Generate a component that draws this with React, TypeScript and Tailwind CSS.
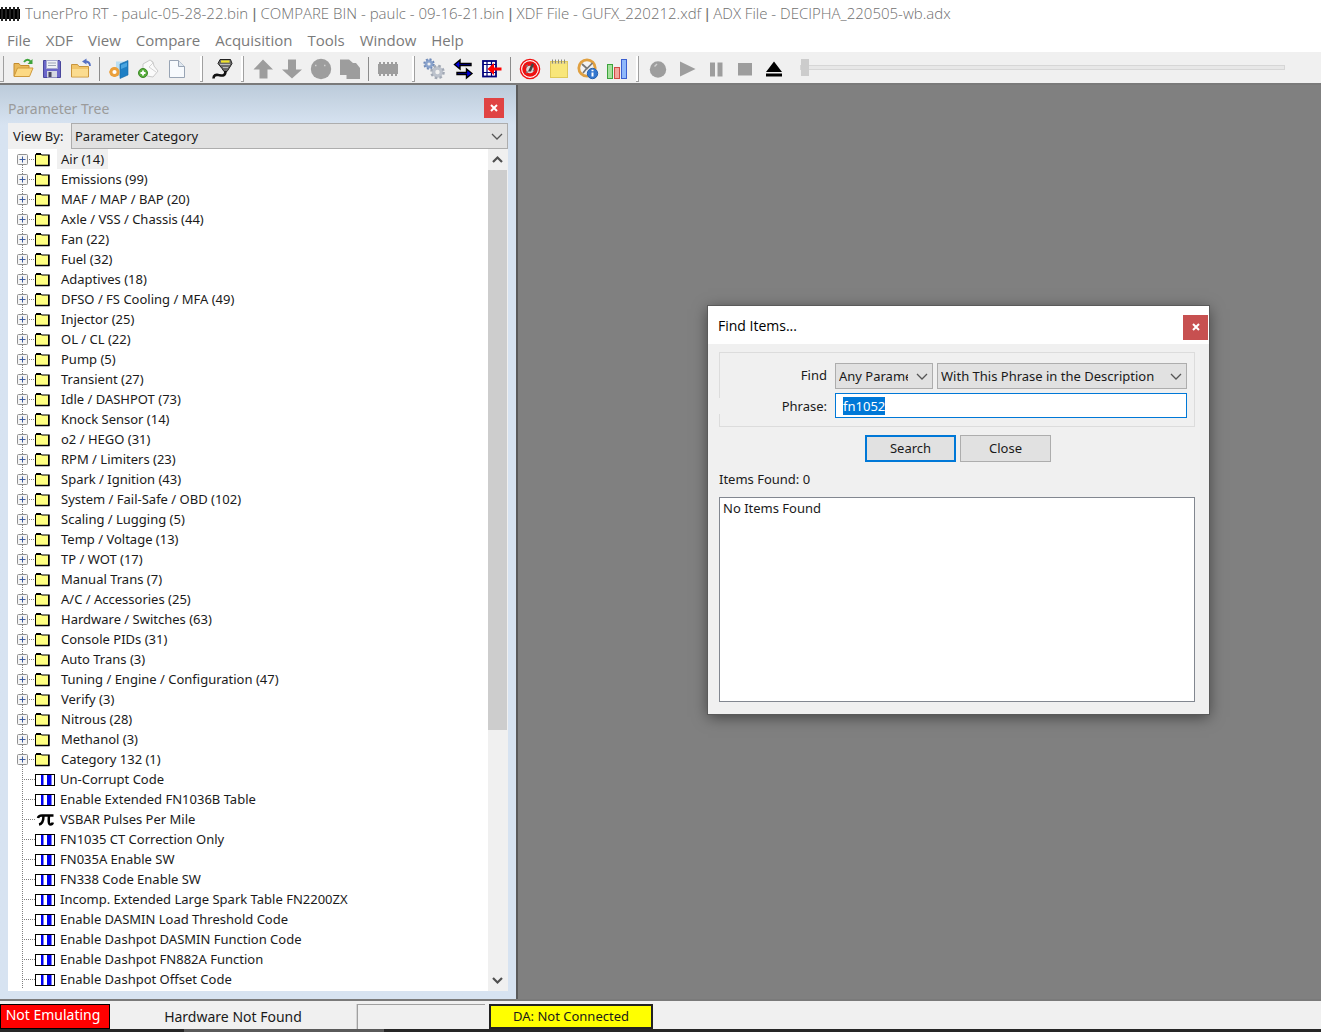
import React, { useEffect, useRef } from 'react';

const titleParts = [
  'TunerPro RT - paulc-05-28-22.bin',
  'COMPARE BIN - paulc - 09-16-21.bin',
  'XDF File - GUFX_220212.xdf',
  'ADX File - DECIPHA_220505-wb.adx',
];

const menuItems = ['File', 'XDF', 'View', 'Compare', 'Acquisition', 'Tools', 'Window', 'Help'];

const categories = [
  'Air (14)',
  'Emissions (99)',
  'MAF / MAP / BAP (20)',
  'Axle / VSS / Chassis (44)',
  'Fan (22)',
  'Fuel (32)',
  'Adaptives (18)',
  'DFSO / FS Cooling / MFA (49)',
  'Injector (25)',
  'OL / CL (22)',
  'Pump (5)',
  'Transient (27)',
  'Idle / DASHPOT (73)',
  'Knock Sensor (14)',
  'o2 / HEGO (31)',
  'RPM / Limiters (23)',
  'Spark / Ignition (43)',
  'System / Fail-Safe / OBD (102)',
  'Scaling / Lugging (5)',
  'Temp / Voltage (13)',
  'TP / WOT (17)',
  'Manual Trans (7)',
  'A/C / Accessories (25)',
  'Hardware / Switches (63)',
  'Console PIDs (31)',
  'Auto Trans (3)',
  'Tuning / Engine / Configuration (47)',
  'Verify (3)',
  'Nitrous (28)',
  'Methanol (3)',
  'Category 132 (1)',
];

const parameters = [
  { label: 'Un-Corrupt Code', kind: 'flag' },
  { label: 'Enable Extended FN1036B Table', kind: 'flag' },
  { label: 'VSBAR Pulses Per Mile', kind: 'constant' },
  { label: 'FN1035 CT Correction Only', kind: 'flag' },
  { label: 'FN035A Enable SW', kind: 'flag' },
  { label: 'FN338 Code Enable SW', kind: 'flag' },
  { label: 'Incomp. Extended Large Spark Table FN2200ZX', kind: 'flag' },
  { label: 'Enable DASMIN Load Threshold Code', kind: 'flag' },
  { label: 'Enable Dashpot DASMIN Function Code', kind: 'flag' },
  { label: 'Enable Dashpot FN882A Function', kind: 'flag' },
  { label: 'Enable Dashpot Offset Code', kind: 'flag' },
];

const Icon: React.FC<{ children: React.ReactNode }> = ({ children }) => (
  <svg className="h-[22px] w-[22px]" viewBox="0 0 22 22" fill="none" aria-hidden="true">
    {children}
  </svg>
);

const openIcon = (
  <Icon>
    <path d="M2 18V5.500h5l1.500 2H17v3" fill="#e9b95a" stroke="#c48b2c" />
    <path d="M2 18.500 5.500 10H21l-3.500 8.500z" fill="#fcd983" stroke="#cf9a3b" />
    <path d="M12 4c2-3 5-3 7 0" stroke="#3da33a" strokeWidth="1.800" />
    <path d="M20.500 1v5h-5z" fill="#3da33a" />
  </Icon>
);

const saveIcon = (
  <Icon>
    <path d="M2.500 2.500h16l1 1v16h-17z" fill="#6b67c9" stroke="#4a479c" />
    <rect x="5.500" y="2.500" width="11" height="8" fill="#eef0f6" stroke="#a5a7cf" />
    <path d="M7 5h8M7 7.500h8" stroke="#9ba3b5" />
    <rect x="6" y="13" width="10" height="6.500" fill="#d5d8e2" />
    <rect x="7.500" y="14" width="3" height="5" fill="#47455f" />
  </Icon>
);

const closeFolderIcon = (
  <Icon>
    <path d="M1.500 19V6.500h6l1.500 2h9.500V19z" fill="#f1c56a" stroke="#c9953c" />
    <path d="M2 11h16v7.500H2z" fill="#fbdc8f" />
    <path d="M20 8c0-3-2-4.500-5-4.500" stroke="#5671c4" strokeWidth="1.800" />
    <path d="M12 3.500 16.500.500v6z" fill="#5671c4" />
  </Icon>
);

const compareIcon = (
  <Icon>
    <path d="M8 3.500h8V18H8z" fill="#b9dff5" />
    <path d="M12 6 20 2.500V17l-8 3.500z" fill="#1e7fc4" stroke="#1668a5" strokeWidth=".6" />
    <path d="M13 7 19 4.500v4L13 11z" fill="#4aa5e0" />
    <circle cx="6.500" cy="14" r="3.600" stroke="#eba03c" strokeWidth="3" fill="#fff" />
    <path d="M6.500 9v1M6.500 18v1M1.500 14h1M3 10.500l1 1M3 17.500l1-1M10 17.500l-1-1" stroke="#eba03c" strokeWidth="2" />
  </Icon>
);

const addScriptIcon = (
  <Icon>
    <path d="M6 6 13 2l3 2 1 4 4 5-5 6-6-1-4-6z" fill="#fafafa" stroke="#c9c9c9" />
    <path d="m13 2 3 3-4 4 7 5" stroke="#d4d4d4" />
    <circle cx="6" cy="15" r="4.500" fill="#58ad3c" stroke="#3d8a28" />
    <path d="M6 12.500v5M3.500 15h5" stroke="#fff" strokeWidth="1.800" />
  </Icon>
);

const newFileIcon = (
  <Icon>
    <path d="M3.500 2.500h9l6 6v11h-15z" fill="#f7fafd" stroke="#98a4b4" />
    <path d="M12.500 2.500v6h6" fill="#dfe7ef" stroke="#98a4b4" />
  </Icon>
);

const plugIcon = (
  <Icon>
    <path d="M9 1.500h10.500l1.500 4-3 5-2 3h-3l-2-3-4-5z" fill="#6a6a6a" stroke="#222" />
    <path d="M10 3.500h8.500" stroke="#f1e52a" strokeWidth="2.200" />
    <path d="M9 6.500h10M12 9.500h5" stroke="#bbb" />
    <path d="M14.500 13c0 6-4 4.500-7 4-2.500-.5-5 0-5 3.500" stroke="#111" strokeWidth="2.600" />
  </Icon>
);

const arrowUpIcon = (
  <Icon>
    <path d="M11 1.500 21 11.500h-5.500v9h-8v-9H1.500z" fill="#9d9d9d" />
  </Icon>
);

const arrowDownIcon = (
  <Icon>
    <path d="M11 20.500 1 11.500h6V1.500h8v10h6z" fill="#9d9d9d" />
  </Icon>
);

const faceIcon = (
  <Icon>
    <circle cx="11" cy="11" r="10.200" fill="#9d9d9d" />
    <path d="M5 7.500h1.500M14 7.500h1.500" stroke="#d0d0d0" strokeWidth="1.500" />
  </Icon>
);

const copyIcon = (
  <Icon>
    <path d="M1 1.500h9l4 3.500h3l4 5v11H7.500V17H1z" fill="#9d9d9d" />
  </Icon>
);

const chipIcon = (
  <Icon>
    <rect x="1" y="6" width="20" height="10" fill="#9d9d9d" />
    {[2, 6, 10, 14, 18].map((x) => (
      <rect key={x} x={x} y="4" width="2" height="14" fill="#9d9d9d" />
    ))}
  </Icon>
);

const gearsIcon = (
  <Icon>
    <circle cx="6" cy="6" r="3" stroke="#8aa3cc" strokeWidth="2.800" />
    <circle cx="6" cy="6" r="4.800" stroke="#6f8ab8" strokeWidth="1.800" strokeDasharray="2 1.770" />
    <circle cx="14.500" cy="14" r="4" stroke="#bcc2cc" strokeWidth="3.600" />
    <circle cx="14.500" cy="14" r="6.200" stroke="#a1a8b4" strokeWidth="2.200" strokeDasharray="2.600 2.270" />
  </Icon>
);

const swapIcon = (
  <Icon>
    <path d="M2.500 6.500 8 2v3.500h11v2H8V11z" fill="#0000e0" stroke="#000" strokeWidth="1.400" />
    <path d="m20 15.500-5.500-4.500v3.500H5v2h9.500V20z" fill="#0000e0" stroke="#000" strokeWidth="1.400" />
  </Icon>
);

const tableArrowIcon = (
  <Icon>
    <rect x="2" y="3" width="13" height="15.500" fill="#fff" stroke="#00007c" strokeWidth="1.800" />
    <path d="M2 6.500h13M2 14.500h13M6 3v15M10.500 3v15" stroke="#00007c" strokeWidth="1.200" />
    <path d="m6.500 11 6.500-6v4.500h7.500v3H13V17z" fill="#f00" />
  </Icon>
);

const gaugeIcon = (
  <Icon>
    <circle cx="11" cy="11" r="9.600" fill="#fff" stroke="#f01010" strokeWidth="1.400" />
    <circle cx="11" cy="11" r="7.800" fill="#ee1010" />
    <circle cx="11" cy="11.500" r="3.800" fill="#d8d8d8" />
    <path d="M9 13.500 13 5l2 1.500-3 7z" fill="#444" />
    <path d="M6.500 8.500 9 7M7 15l1.500-1.500M15.500 13l-1.500-1" stroke="#777" strokeWidth="1.300" />
  </Icon>
);

const noteIcon = (
  <Icon>
    <rect x="2.500" y="3.500" width="17" height="16" fill="#f8e67a" stroke="#dfc95a" />
    <path d="M3 5h16" stroke="#e9d88a" strokeWidth="2" />
    <path d="M4.500 1.500v4M7.500 1.500v4M10.500 1.500v4M13.500 1.500v4M16.500 1.500v4" stroke="#8a8a7a" />
  </Icon>
);

const clockInfoIcon = (
  <Icon>
    <circle cx="10" cy="10" r="8.200" fill="#f3f3f3" stroke="#e0a040" strokeWidth="2.800" />
    <path d="m5 6 5 4.500L15.500 5M10 10l-4 5" stroke="#777" strokeWidth="1.700" />
    <circle cx="15.500" cy="15.500" r="5.200" fill="#3477cf" stroke="#2560ae" />
    <path d="M15.500 14.500v4M15.500 11.800v1.500" stroke="#fff" strokeWidth="2" />
  </Icon>
);

const chartIcon = (
  <Icon>
    <rect x="1.500" y="6.500" width="5" height="14" fill="#a5e09c" stroke="#3ca33c" />
    <rect x="8.500" y="9.500" width="5" height="11" fill="#f2a59c" stroke="#cf4b45" />
    <rect x="15.500" y="1.500" width="5" height="19" fill="#8fb9fb" stroke="#3b5fd0" />
  </Icon>
);

const recordIcon = (
  <Icon>
    <circle cx="11" cy="11.500" r="8.200" fill="#9d9d9d" />
    <path d="m7.500 8.500 2.500-2.500" stroke="#d0d0d0" strokeWidth="1.500" />
  </Icon>
);

const playIcon = (
  <Icon>
    <path d="M4 3.500v15l15.500-7.500z" fill="#9d9d9d" />
  </Icon>
);

const pauseIcon = (
  <Icon>
    <path d="M5 4.500h5v14H5zM12.500 4.500h5v14h-5z" fill="#9d9d9d" />
  </Icon>
);

const stopIcon = (
  <Icon>
    <rect x="4" y="5" width="14" height="12.500" fill="#9d9d9d" />
  </Icon>
);

const ejectIcon = (
  <Icon>
    <path d="M11 3.500 19 14H3zM3 15.500h16v3H3z" fill="#000" />
  </Icon>
);

const ToolButton: React.FC<{ label: string; icon: React.ReactNode }> = ({ label, icon }) => (
  <button type="button" aria-label={label} className="flex w-[29px] shrink-0 items-center justify-center">
    {icon}
  </button>
);

const Divider = () => (
  <span className="flex w-[9px] shrink-0 items-center justify-center">
    <span className="h-6 w-px bg-[#8c8c8c]" />
  </span>
);

const Grip: React.FC<{ className: string }> = ({ className }) => (
  <span className={`flex shrink-0 items-center justify-end pr-1 ${className}`}>
    <span className="h-[26px] w-[3px] border-r border-b border-[#a0a0a0] bg-white" />
  </span>
);

const Chevron: React.FC<{ className?: string }> = ({ className = '' }) => (
  <svg className={`pointer-events-none h-[7px] w-3 ${className}`} viewBox="0 0 12 7" fill="none" aria-hidden="true">
    <path d="m1 1 5 5 5-5" stroke="#555" strokeWidth="1.300" />
  </svg>
);

const ScrollArrow: React.FC<{ up?: boolean }> = ({ up }) => (
  <svg className="h-[9px] w-[11px]" viewBox="0 0 11 9" fill="none" aria-hidden="true">
    <path d={up ? 'm1 7 4.500-4.500L10 7' : 'm1 2 4.500 4.500L10 2'} stroke="#505050" strokeWidth="2.200" />
  </svg>
);

const CloseGlyph = () => (
  <svg className="h-2 w-2" viewBox="0 0 8 8" aria-hidden="true">
    <path d="m1 1 6 6M7 1 1 7" stroke="#fff" strokeWidth="2" />
  </svg>
);

const FolderRow: React.FC<{ label: string; selected: boolean; first: boolean }> = ({ label, selected, first }) => (
  <li className="flex h-5 items-center">
    <svg className="h-5 w-[42px] shrink-0" viewBox="0 0 42 20" fill="none" aria-hidden="true">
      <path d={first ? 'M14.500 10v10' : 'M14.500 0v20'} stroke="#808080" strokeDasharray="1 1" />
      <path d="M21 10.500h6" stroke="#808080" strokeDasharray="1 1" />
      <rect x="9.500" y="5.500" width="10" height="10" rx="1" fill="#f5f5f5" stroke="#919191" />
      <path d="M11.500 10.500h6M14.500 7.500v6" stroke="#3b5a9e" />
      <path d="M27.500 16.500V5.500l1-1h4l1 1.500h7v10.500z" fill="#ffff80" stroke="#000" />
      <path d="M28 5h5" stroke="#000" strokeWidth="2" />
      <path d="M41 5.500V17M27 16.500h14.500" stroke="#000" strokeWidth="1.500" />
    </svg>
    <button type="button" className={`ml-[7px] h-5 px-1 leading-5 ${selected ? 'bg-[#f0f0f0]' : ''}`}>
      {label}
    </button>
  </li>
);

const ParameterRow: React.FC<{ label: string; kind: string }> = ({ label, kind }) => (
  <li className="flex h-5 items-center">
    <svg className="h-5 w-[49px] shrink-0" viewBox="0 0 49 20" fill="none" aria-hidden="true">
      <path d="M14.500 0v20M16 10.500h11" stroke="#808080" strokeDasharray="1 1" />
      {kind === 'flag' ? (
        <>
          <rect x="27.500" y="5.500" width="19" height="11" fill="#fff" stroke="#000" />
          <path d="M33 6h2.500v10H33zM39 6h4.500v10H39z" fill="#0000f0" />
        </>
      ) : (
        <path d="M30 9c.5-2.500 2-2.500 4-2.500h11.500M35.500 6.500c0 4-1 8.500-4.500 9M41 6.500c-.5 5-.5 9 1.500 9 1 0 2-.5 2.300-2" stroke="#000" strokeWidth="2.500" />
      )}
    </svg>
    <button type="button" className="pl-[3px] leading-5">{label}</button>
  </li>
);

const ParameterTree = () => (
  <aside className="flex w-[518px] shrink-0 flex-col border-r-2 border-[#5a5a5a] bg-[#d7e3f1] bg-linear-to-b from-[#bccbda] from-0% to-[#d7e3f1] to-[40px] px-2 pb-2">
    <div className="flex h-[38px] items-center justify-between pr-1 pt-2">
      <h2 className="text-[14px] text-[#9b9b9b]">Parameter Tree</h2>
      <button type="button" aria-label="Close parameter tree" className="flex size-5 items-center justify-center bg-[#e04343]">
        <CloseGlyph />
      </button>
    </div>
    <div className="flex h-[26px] shrink-0 bg-[#f0f0f0]">
      <label htmlFor="view-by" className="w-[63px] shrink-0 pl-[5px] leading-[26px]">View By:</label>
      <div className="relative flex flex-1">
        <select id="view-by" className="w-full appearance-none border border-[#adadad] bg-[#e1e1e1] px-[3px] pt-px">
          <option>Parameter Category</option>
        </select>
        <Chevron className="absolute top-[10px] right-[5px]" />
      </div>
    </div>
    <div className="flex min-h-0 flex-1 bg-white">
      <ul className="flex-1 overflow-hidden">
        {categories.map((label, i) => (
          <FolderRow key={label} label={label} selected={i === 0} first={i === 0} />
        ))}
        {parameters.map((p) => (
          <ParameterRow key={p.label} label={p.label} kind={p.kind} />
        ))}
      </ul>
      <div className="flex w-5 shrink-0 flex-col bg-[#f0f0f0] pr-px">
        <button type="button" aria-label="Scroll up" className="flex h-[21px] items-center justify-center">
          <ScrollArrow up />
        </button>
        <div className="flex-1">
          <div className="h-[70%] bg-[#cdcdcd]" />
        </div>
        <button type="button" aria-label="Scroll down" className="flex h-[21px] items-center justify-center">
          <ScrollArrow />
        </button>
      </div>
    </div>
  </aside>
);

const FindDialog = () => {
  const phraseRef = useRef<HTMLInputElement>(null);

  useEffect(() => {
    phraseRef.current?.focus();
    phraseRef.current?.select();
  }, []);

  return (
    <section
      role="dialog"
      aria-labelledby="find-title"
      className="absolute top-[221px] left-[190px] flex h-[408px] w-[501px] flex-col bg-[#f0f0f0] shadow-[0_3px_14px_rgba(0,0,0,0.5)] outline outline-[#5a5a5a]"
    >
      <header className="flex h-[38px] shrink-0 items-center justify-between bg-white pr-px pl-[10px]">
        <h2 id="find-title" className="font-['Open_Sans',sans-serif] text-[14px] text-black">Find Items...</h2>
        <button type="button" aria-label="Close dialog" className="mt-1 flex size-[25px] items-center justify-center bg-[#c75050]">
          <CloseGlyph />
        </button>
      </header>
      <div className="flex flex-1 flex-col pt-2 pr-[14px] pb-3 pl-[11px]">
        <fieldset className="flex flex-col gap-1 border border-[#dcdcdc] pt-[10px] pr-[7px] pb-2">
          <div className="flex h-[26px] gap-1">
            <label htmlFor="find-scope" className="w-[111px] shrink-0 pr-1 text-right leading-6">Find</label>
            <div className="relative flex w-[98px] shrink-0">
              <select id="find-scope" className="w-full appearance-none border border-[#adadad] bg-[#e1e1e1] pt-px pr-6 pl-[3px]">
                <option>Any Parameter</option>
              </select>
              <Chevron className="absolute top-[10px] right-[5px]" />
            </div>
            <div className="relative flex flex-1">
              <select aria-label="Match type" className="w-full appearance-none border border-[#adadad] bg-[#e1e1e1] pt-px pr-6 pl-[3px]">
                <option>With This Phrase in the Description</option>
              </select>
              <Chevron className="absolute top-[10px] right-[5px]" />
            </div>
          </div>
          <div className="flex h-[25px] items-center gap-1">
            <label htmlFor="find-phrase" className="-ml-px w-28 shrink-0 bg-[#f0f0f0] pr-1 text-right leading-4">Phrase:</label>
            <input
              id="find-phrase"
              ref={phraseRef}
              type="text"
              defaultValue="fn1052"
              className="h-full min-w-0 flex-1 border border-[#0078d7] bg-white px-[7px] outline-none selection:bg-[#0078d7] selection:text-white"
            />
          </div>
        </fieldset>
        <div className="flex justify-center gap-1 pt-2 pl-[2px]">
          <button type="button" className="h-[27px] w-[91px] border-2 border-[#0078d7] bg-[#e1e1e1]">Search</button>
          <button type="button" className="h-[27px] w-[91px] border border-[#adadad] bg-[#e1e1e1]">Close</button>
        </div>
        <p className="leading-[35px]">Items Found: 0</p>
        <ul className="flex-1 border border-[#828790] bg-white px-[3px]">
          <li className="leading-5">No Items Found</li>
        </ul>
      </div>
    </section>
  );
};

const App: React.FC = () => (
  <div className="flex h-screen flex-col overflow-hidden bg-[#f0f0f0] font-['Noto_Sans',sans-serif] text-[13px] text-[#1a1a1a]">
    <header className="flex h-7 shrink-0 items-center gap-[5px] bg-white">
      <svg className="h-4 w-5 shrink-0" viewBox="0 0 20 16" aria-hidden="true">
        <path d="M0 3h20v10H0z" fill="#000" />
        <path d="M1 1h2v14H1zM5 1h2v14H5zM9 1h2v14H9zM13 1h2v14h-2zM17 1h2v14h-2z" fill="#222" />
      </svg>
      <h1 className="truncate font-['Open_Sans',sans-serif] text-[15px] font-light text-[#6f6f6f]">
        {titleParts.map((part, i) => (
          <React.Fragment key={part}>
            {i > 0 && <span className="font-['Liberation_Sans',sans-serif]"> | </span>}
            {part}
          </React.Fragment>
        ))}
      </h1>
    </header>

    <nav className="flex h-6 shrink-0 items-center gap-[15px] bg-white px-[7px] font-['Open_Sans',sans-serif] text-[15px] text-[#7a7a7a]">
      {menuItems.map((item) => (
        <button key={item} type="button">{item}</button>
      ))}
    </nav>

    <div className="flex h-[33px] shrink-0 border-b-2 border-[#7a7a7a] pt-[3px]">
      <span className="mr-1 h-[26px] w-1 shrink-0 self-center border-r border-b border-[#a0a0a0]" />
      <ToolButton label="Open" icon={openIcon} />
      <ToolButton label="Save" icon={saveIcon} />
      <ToolButton label="Close file" icon={closeFolderIcon} />
      <Divider />
      <ToolButton label="Compare" icon={compareIcon} />
      <ToolButton label="Add definition" icon={addScriptIcon} />
      <ToolButton label="New definition" icon={newFileIcon} />
      <Grip className="w-4" />
      <ToolButton label="Connect" icon={plugIcon} />
      <Grip className="w-3" />
      <ToolButton label="Upload" icon={arrowUpIcon} />
      <ToolButton label="Download" icon={arrowDownIcon} />
      <ToolButton label="Verify" icon={faceIcon} />
      <ToolButton label="Copy" icon={copyIcon} />
      <Divider />
      <ToolButton label="Chip" icon={chipIcon} />
      <Grip className="w-[17px]" />
      <ToolButton label="Settings" icon={gearsIcon} />
      <ToolButton label="Swap" icon={swapIcon} />
      <ToolButton label="Import table" icon={tableArrowIcon} />
      <Divider />
      <ToolButton label="Gauges" icon={gaugeIcon} />
      <ToolButton label="Notes" icon={noteIcon} />
      <ToolButton label="History" icon={clockInfoIcon} />
      <ToolButton label="Charts" icon={chartIcon} />
      <Grip className="w-3" />
      <ToolButton label="Record" icon={recordIcon} />
      <ToolButton label="Play" icon={playIcon} />
      <ToolButton label="Pause" icon={pauseIcon} />
      <ToolButton label="Stop" icon={stopIcon} />
      <ToolButton label="Eject" icon={ejectIcon} />
      <input
        type="range"
        aria-label="Playback position"
        defaultValue={0}
        className="mr-9 mb-1 ml-3 min-w-0 flex-1 appearance-none bg-transparent [&::-webkit-slider-runnable-track]:h-[5px] [&::-webkit-slider-runnable-track]:border [&::-webkit-slider-runnable-track]:border-[#d6d6d6] [&::-webkit-slider-runnable-track]:bg-[#e7e7e7] [&::-webkit-slider-thumb]:-mt-[7px] [&::-webkit-slider-thumb]:h-[17px] [&::-webkit-slider-thumb]:w-2 [&::-webkit-slider-thumb]:appearance-none [&::-webkit-slider-thumb]:bg-[#cccccc]"
      />
    </div>

    <main className="flex min-h-0 flex-1">
      <ParameterTree />
      <div className="relative flex-1 bg-[#808080]">
        <FindDialog />
      </div>
    </main>

    <footer className="flex h-[30px] shrink-0 border-t-2 border-[#7a7a7a] pt-[3px] text-[14px]">
      <div className="flex w-[110px] shrink-0 justify-center border border-black bg-[#ff0000] pr-1 leading-5 text-white">Not Emulating</div>
      <div className="flex w-[247px] shrink-0 items-center justify-center border-r border-[#d5d5d5]">Hardware Not Found</div>
      <div className="mr-1 w-32 shrink-0 border-t border-l border-[#a0a0a0]" />
      <div className="flex w-[164px] shrink-0 items-center justify-center border-2 border-[#222] bg-[#ffff00] text-[13px]">DA: Not Connected</div>
    </footer>
    <div className="flex h-[3px] shrink-0 bg-[#262626]">
      <div className="ml-[184px] w-[200px] bg-[#5a5a5a]" />
    </div>
  </div>
);

export default App;
